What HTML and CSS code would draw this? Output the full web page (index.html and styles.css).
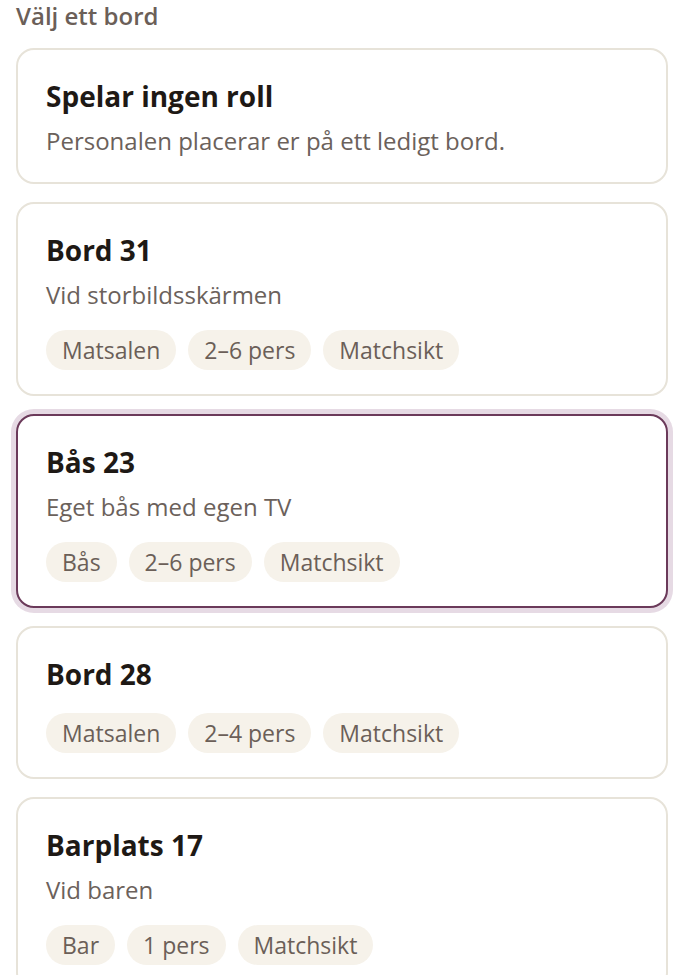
FILE: index.html
```html
<!DOCTYPE html>
<html lang="sv">
<head>
<meta charset="utf-8">
<title>Välj ett bord</title>
<link rel="stylesheet" href="styles.css">
</head>
<body>
<main class="picker">
  <h2 class="picker-label">Välj ett bord</h2>
  <div class="options">
    <div class="option">
      <div class="option-title">Spelar ingen roll</div>
      <div class="option-desc">Personalen placerar er på ett ledigt bord.</div>
    </div>
    <div class="option">
      <div class="option-title">Bord 31</div>
      <div class="option-desc">Vid storbildsskärmen</div>
      <div class="chips"><span class="chip">Matsalen</span><span class="chip">2–6 pers</span><span class="chip">Matchsikt</span></div>
    </div>
    <div class="option selected">
      <div class="option-title">Bås 23</div>
      <div class="option-desc">Eget bås med egen TV</div>
      <div class="chips"><span class="chip">Bås</span><span class="chip">2–6 pers</span><span class="chip">Matchsikt</span></div>
    </div>
    <div class="option">
      <div class="option-title">Bord 28</div>
      <div class="chips"><span class="chip">Matsalen</span><span class="chip">2–4 pers</span><span class="chip">Matchsikt</span></div>
    </div>
    <div class="option">
      <div class="option-title">Barplats 17</div>
      <div class="option-desc">Vid baren</div>
      <div class="chips"><span class="chip">Bar</span><span class="chip">1 pers</span><span class="chip">Matchsikt</span></div>
    </div>
  </div>
</main>
</body>
</html>
```
FILE: styles.css
```css
html, body {
  margin: 0;
  padding: 0;
  background: #ffffff;
}
body {
  font-family: "Open Sans", "Noto Sans", sans-serif;
  color: #1f1a17;
}
.picker {
  width: 652px;
  padding: 0 0 0 16px;
}
.picker-label {
  margin: 0;
  padding-top: 2px;
  font-size: 24px;
  line-height: 28px;
  font-weight: 600;
  color: #6b5f58;
}
.options {
  display: flex;
  flex-direction: column;
  gap: 18px;
  margin-top: 18px;
}
.option {
  border: 2px solid #e7e3d9;
  border-radius: 18px;
  padding: 28px 28px 24px;
  display: flex;
  flex-direction: column;
  background: #fff;
}
.option.selected {
  border-color: #6b3a5a;
  box-shadow: 0 0 0 5px #e6dae4;
}
.option-title {
  font-size: 28px;
  line-height: 36px;
  font-weight: 700;
  color: #1e1915;
}
.option-desc {
  margin-top: 12px;
  font-size: 24px;
  line-height: 30px;
  color: #6b615b;
}
.option-desc:last-child {
  margin-bottom: 2px;
}
.chips {
  display: flex;
  gap: 12px;
  margin-top: 20px;
}
.option-title + .chips {
  margin-top: 21px;
}
.chip {
  background: #f6f2ea;
  color: #6b5f58;
  border-radius: 20px;
  height: 40px;
  padding: 0 16px;
  font-size: 23px;
  line-height: 40px;
}
```
